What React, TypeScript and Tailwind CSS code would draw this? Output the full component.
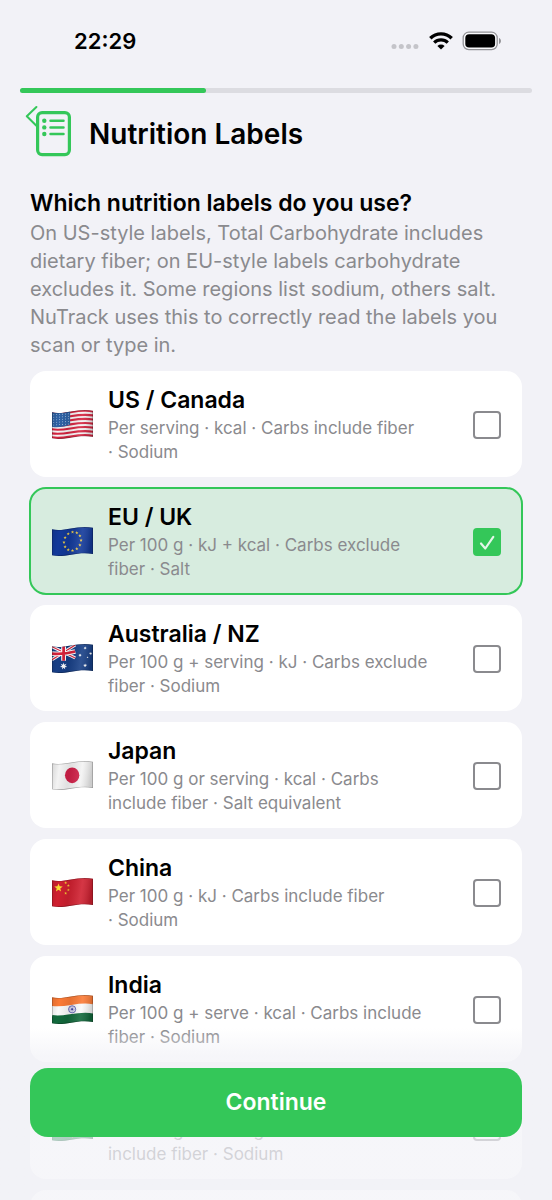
import { useState, type ReactNode } from 'react';

interface Region {
  id: string;
  name: string;
  details: string;
}

// the separator sticks to the word that follows it
const regions: Region[] = [
  { id: 'us', name: 'US / Canada', details: 'Per serving · kcal · Carbs include fiber ·\u00a0Sodium' },
  { id: 'eu', name: 'EU / UK', details: 'Per 100 g · kJ + kcal · Carbs exclude fiber · Salt' },
  { id: 'au', name: 'Australia / NZ', details: 'Per 100 g + serving · kJ · Carbs exclude fiber · Sodium' },
  { id: 'jp', name: 'Japan', details: 'Per 100 g or serving · kcal · Carbs include fiber · Salt equivalent' },
  { id: 'cn', name: 'China', details: 'Per 100 g · kJ · Carbs include fiber ·\u00a0Sodium' },
  { id: 'in', name: 'India', details: 'Per 100 g + serve · kcal · Carbs include fiber · Sodium' },
  { id: 'br', name: 'Brazil', details: 'Per 100 g + serving · kcal · Carbs include fiber · Sodium' },
  { id: 'other', name: 'Other', details: 'Per 100 g · kcal · Carbs include fiber ·\u00a0Sodium' },
];

const starPoints = (cx: number, cy: number, r: number, spikes = 5) =>
  Array.from({ length: spikes * 2 }, (_, i) => {
    const radius = i % 2 === 0 ? r : r * 0.42;
    const angle = (Math.PI * i) / spikes - Math.PI / 2;
    return `${cx + radius * Math.cos(angle)},${cy + radius * Math.sin(angle)}`;
  }).join(' ');

function Star({ x, y, r, fill, spikes }: { x: number; y: number; r: number; fill: string; spikes?: number }) {
  return <polygon points={starPoints(x, y, r, spikes)} fill={fill} />;
}

const wave = (y: number) => `M-2 ${y + 7} C38 ${y + 16} 72 ${y - 7} 122 ${y + 3}`;
const FLAG_SHAPE = 'M0 8 C38 16 72 -6 120 3 V80 C72 71 38 93 0 84 Z';

function flagArt(id: string): ReactNode {
  switch (id) {
    case 'us':
      return (
        <>
          <rect width="120" height="90" fill="#f7f4f5" />
          {[0, 1, 2, 3, 4, 5, 6].map((i) => (
            <path key={i} d={wave(2.5 + i * 11.9)} stroke="#d5233f" strokeWidth="6.2" fill="none" />
          ))}
          <path d="M0 6 C20 12 36 9 53 4 V44 C36 49 20 54 0 50 Z" fill="#2f62a5" />
          {[0, 1, 2, 3, 4].map((row) =>
            [0, 1, 2, 3, 4, 5].map((col) => (
              <circle key={`${row}-${col}`} cx={5 + col * 8.6} cy={15 + row * 7.5 - col * 0.6} r="1.5" fill="#a9c2e0" />
            ))
          )}
        </>
      );
    case 'eu':
      return (
        <>
          <rect width="120" height="90" fill="#12399a" />
          {Array.from({ length: 12 }, (_, i) => {
            const a = (i * Math.PI) / 6;
            return <Star key={i} x={60 + 25 * Math.sin(a)} y={43 - 27 * Math.cos(a) - 3 * Math.sin(a)} r={5} fill="#f3cf45" />;
          })}
        </>
      );
    case 'au':
      return (
        <>
          <rect width="120" height="90" fill="#173f86" />
          <path d="M0 9 L68 42 M0 47 L68 4" stroke="#fff" strokeWidth="9" />
          <path d="M0 9 L68 42 M0 47 L68 4" stroke="#d8213b" strokeWidth="3.5" />
          <path d="M34 4 V50 M0 29 Q34 32 68 23" stroke="#fff" strokeWidth="14" fill="none" />
          <path d="M34 4 V50 M0 29 Q34 32 68 23" stroke="#d8213b" strokeWidth="8" fill="none" />
          <Star x={34} y={66} r={11} fill="#fff" spikes={7} />
          <Star x={97} y={13} r={5} fill="#fff" spikes={7} />
          <Star x={82} y={34} r={5} fill="#fff" spikes={7} />
          <Star x={113} y={29} r={5} fill="#fff" spikes={7} />
          <Star x={97} y={64} r={6} fill="#fff" spikes={7} />
          <Star x={104} y={40} r={3} fill="#fff" />
        </>
      );
    case 'jp':
      return (
        <>
          <rect width="120" height="90" fill="#f3f3f3" />
          <ellipse cx="59" cy="43" rx="21" ry="23" fill="#cf1f47" />
        </>
      );
    case 'cn':
      return (
        <>
          <rect width="120" height="90" fill="#d02030" />
          <Star x={19} y={30} r={13} fill="#fbdc33" />
          <Star x={40} y={15} r={4.5} fill="#f6c832" />
          <Star x={48} y={23} r={4.5} fill="#f6c832" />
          <Star x={48} y={36} r={4.5} fill="#f6c832" />
          <Star x={40} y={46} r={4.5} fill="#f6c832" />
        </>
      );
    case 'in':
      return (
        <>
          <rect width="120" height="90" fill="#fafafa" />
          <path d={wave(11)} stroke="#fb7a35" strokeWidth="29" fill="none" />
          <path d={wave(67)} stroke="#12693c" strokeWidth="29" fill="none" />
          <circle cx="59" cy="43" r="10.5" fill="#e8e8f6" stroke="#3d3da0" strokeWidth="2.2" />
          <path d="M59 33 V53 M49 43 H69 M52 36 L66 50 M66 36 L52 50" stroke="#7474bd" strokeWidth="1.2" />
          <circle cx="59" cy="43" r="3" fill="#3d3da0" />
        </>
      );
    case 'br':
      return (
        <>
          <rect width="120" height="90" fill="#14864a" />
          <path d="M60 12 L108 42 L60 76 L12 46 Z" fill="#f8d433" />
          <circle cx="60" cy="44" r="16" fill="#20478f" />
        </>
      );
    default:
      return <rect width="120" height="90" fill="#5a94d6" />;
  }
}

function Flag({ id }: { id: string }) {
  return (
    <svg viewBox="0 0 120 90" className="h-8 w-[41px] shrink-0" aria-hidden="true">
      <defs>
        <clipPath id={`clip-${id}`}>
          <path d={FLAG_SHAPE} />
        </clipPath>
        <linearGradient id={`shade-${id}`} x1="0" y1="0" x2="1" y2="0.1">
          <stop offset="0" stopColor="#000" stopOpacity="0.12" />
          <stop offset="0.2" stopColor="#000" stopOpacity="0" />
          <stop offset="0.45" stopColor="#000" stopOpacity="0.08" />
          <stop offset="0.75" stopColor="#fff" stopOpacity="0.1" />
          <stop offset="1" stopColor="#000" stopOpacity="0.16" />
        </linearGradient>
      </defs>
      <g clipPath={`url(#clip-${id})`}>
        {flagArt(id)}
        <path d={FLAG_SHAPE} fill={`url(#shade-${id})`} stroke="#000" strokeOpacity="0.28" strokeWidth="4" />
      </g>
    </svg>
  );
}

function StatusBar() {
  return (
    <div className="flex h-[82px] shrink-0 items-center justify-between pr-[50px] pl-[74px]">
      <span className="text-[22px] leading-7 font-semibold">22:29</span>
      <div className="flex items-center gap-[9px]">
        <svg viewBox="0 0 29 18" className="h-[18px] w-[29px]" fill="#c4c4c9">
          <circle cx="3" cy="14.5" r="2.5" />
          <circle cx="10.3" cy="14.5" r="2.5" />
          <circle cx="17.6" cy="14.5" r="2.5" />
          <circle cx="24.9" cy="14.5" r="2.5" />
        </svg>
        <svg viewBox="0 0 24 18" className="h-[18px] w-6" fill="none" stroke="#000">
          <path d="M1.3 6.2 A15.4 15.4 0 0 1 22.7 6.2" strokeWidth="3.4" />
          <path d="M5.2 10.6 A9.6 9.6 0 0 1 18.8 10.6" strokeWidth="3.2" />
          <path d="M12 17.5 L8.4 13.9 A5.2 5.2 0 0 1 15.6 13.9 Z" fill="#000" stroke="none" />
        </svg>
        <svg viewBox="0 0 40 20" className="h-5 w-10">
          <rect x="1.2" y="1.2" width="34" height="17.4" rx="5.6" fill="#fafafc" stroke="#929296" strokeWidth="1.3" />
          <rect x="3.3" y="3.3" width="29.8" height="13.2" rx="3.8" />
          <path d="M37 7 C39.6 8 39.6 12 37 13 Z" fill="#929296" />
        </svg>
      </div>
    </div>
  );
}

function Header() {
  return (
    <header className="relative flex items-center gap-[18px] px-9 pt-[18px]">
      <button type="button" aria-label="Back" className="absolute top-3 left-6 h-[22px] w-[14px]">
        <svg viewBox="0 0 14 22" className="h-full w-full" fill="none" stroke="#34c759" strokeWidth="2" strokeLinecap="round" strokeLinejoin="round">
          <path d="M12.4 2 L2.8 11.2 L12.4 20.8" />
        </svg>
      </button>
      <svg viewBox="0 0 35 46" className="h-[46px] w-[35px]" fill="none" stroke="#34c759" strokeLinecap="round">
        <rect x="1.6" y="1.6" width="31.8" height="42" rx="4.5" strokeWidth="3.2" />
        <path d="M14.5 9.8 H27.5 M14.5 16.4 H27.5 M14.5 23 H27.5" strokeWidth="2.5" />
        <g fill="#34c759" stroke="none">
          <circle cx="8.3" cy="9.8" r="2.2" />
          <circle cx="8.3" cy="16.4" r="2.2" />
          <circle cx="8.3" cy="23" r="2.2" />
        </g>
      </svg>
      <h1 className="text-[28px] leading-9 font-semibold">Nutrition Labels</h1>
    </header>
  );
}

interface RegionCardProps {
  region: Region;
  selected: boolean;
  onSelect: (id: string) => void;
}

function RegionCard({ region, selected, onSelect }: RegionCardProps) {
  return (
    <label
      className={`flex cursor-pointer items-center rounded-2xl pt-[14px] pr-[21px] pb-[13px] pl-[22px] ${
        selected ? 'bg-[#d7ecdf] outline-2 -outline-offset-1 outline-[#34c759]' : 'bg-white'
      }`}
    >
      <Flag id={region.id} />
      <span className="ml-[15px] min-w-0 flex-1">
        <span className="block text-[23px] leading-[31px] font-semibold">{region.name}</span>
        <span className="block text-[17px] leading-6 text-[#8a8a8e]">{region.details}</span>
      </span>
      <span className="relative ml-10 size-7 shrink-0">
        <input
          type="checkbox"
          checked={selected}
          onChange={() => onSelect(region.id)}
          className="block size-7 appearance-none rounded-[4px] border-2 border-[#8a8a8e] checked:border-[#34c759] checked:bg-[#34c759]"
        />
        {selected && (
          <svg viewBox="0 0 28 28" className="pointer-events-none absolute inset-0" fill="none" stroke="#e4f6e9" strokeWidth="2.2" strokeLinecap="round" strokeLinejoin="round">
            <path d="M8 15.5 L12.3 20.5 L20.3 8.8" />
          </svg>
        )}
      </span>
    </label>
  );
}

export default function App() {
  const [selected, setSelected] = useState('eu');

  return (
    <div className="relative flex h-screen flex-col overflow-hidden bg-[#f2f2f7] font-['Inter','Liberation_Sans',sans-serif] text-black">
      <StatusBar />
      <div className="mx-5 mt-[6px] h-[5px] shrink-0 rounded-full bg-[#dcdce1]">
        <div className="h-full w-[36.4%] rounded-full bg-[#34c759]" />
      </div>
      <Header />

      <main className="min-h-0 flex-1 overflow-y-auto px-[30px] pt-[31px] [scrollbar-width:none]">
        <h2 className="text-[23px] leading-[31px] font-semibold">Which nutrition labels do you use?</h2>
        <p className="text-[20px] leading-[28px] text-[#8a8a8e]">
          On US-style labels, Total Carbohydrate includes dietary fiber; on EU-style labels carbohydrate excludes it.
          Some regions list sodium, others salt. NuTrack uses this to correctly read the labels you scan or type in.
        </p>
        <div className="mt-3 flex flex-col gap-[11px]">
          {regions.map((region) => (
            <RegionCard key={region.id} region={region} selected={selected === region.id} onSelect={setSelected} />
          ))}
        </div>
      </main>

      <footer className="absolute inset-x-0 bottom-0 bg-linear-to-b from-[#f2f2f7]/0 to-[#f2f2f7]/70 to-[28px] px-[30px] pt-10 pb-[63px]">
        <button type="button" className="h-[69px] w-full rounded-[18px] bg-[#34c759] text-[23px] font-semibold text-white">
          Continue
        </button>
      </footer>
    </div>
  );
}
